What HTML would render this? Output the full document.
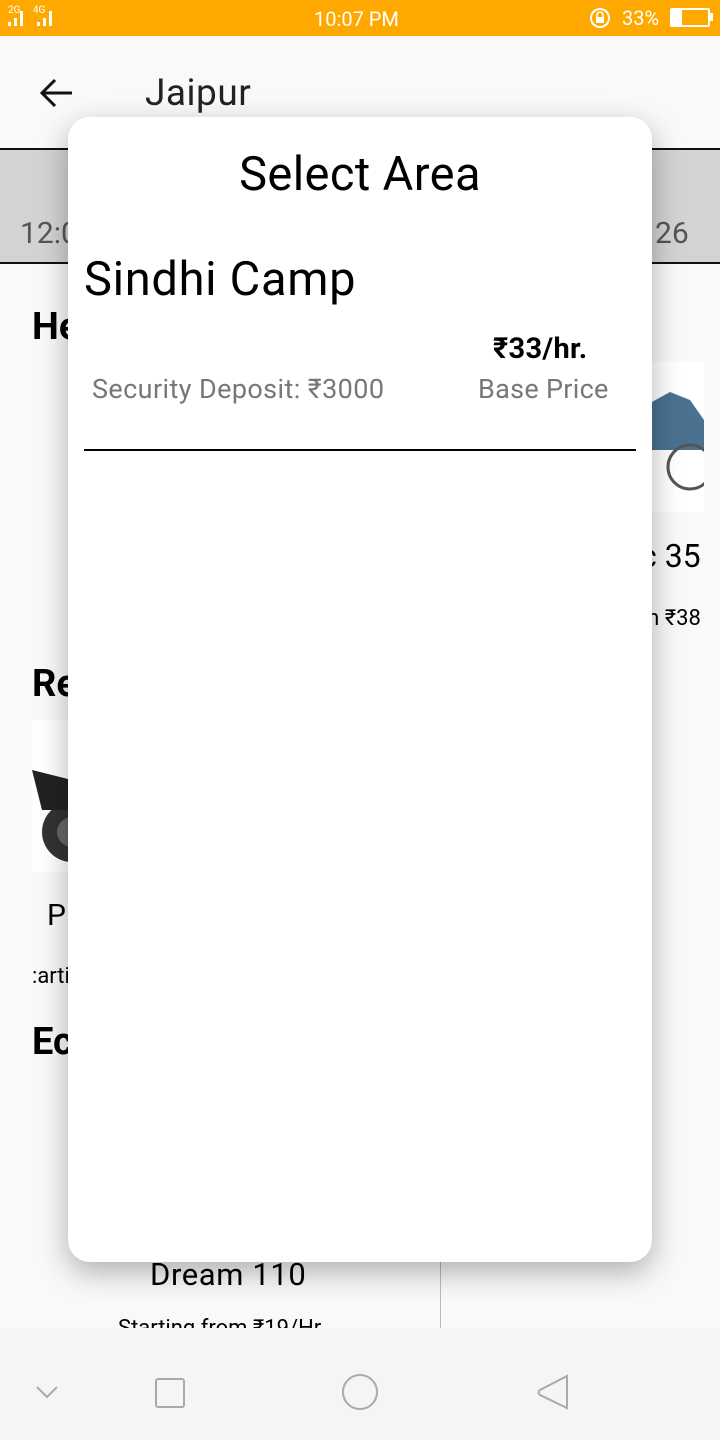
<!DOCTYPE html>
<html><head><meta charset="utf-8"><style>
*{margin:0;padding:0;box-sizing:border-box}
body{width:720px;height:1440px;overflow:hidden;background:#f9f9f9;font-family:"Roboto","Liberation Sans",sans-serif;position:relative}
.a{position:absolute;white-space:nowrap}
</style></head><body>
<div class="a" style="left:0;top:0;width:720px;height:36px;background:#ffa800"></div>
<div class="a" style="left:8px;top:6px;color:#fff;font-size:10px;line-height:10px">2G&nbsp;&nbsp;&nbsp;&nbsp;&nbsp;4G</div>
<svg class="a" style="left:8px;top:8px" width="50" height="20"><g fill="#fff"><rect x="0" y="14" width="3" height="4"/><rect x="6" y="10" width="3" height="8"/><rect x="12" y="3" width="3" height="15"/><rect x="29" y="14" width="3" height="4"/><rect x="35" y="10" width="3" height="8"/><rect x="41" y="3" width="3" height="15"/></g></svg>
<div class="a" style="left:314px;top:7px;color:#fff;font-size:20px">10:07 PM</div>
<svg class="a" style="left:589px;top:7px" width="24" height="24"><circle cx="11" cy="11" r="9" fill="none" stroke="#fff" stroke-width="2"/><rect x="7" y="10" width="8" height="6" fill="#fff"/><path d="M8 10V8a3 3 0 0 1 6 0v2" fill="none" stroke="#fff" stroke-width="1.6"/></svg>
<div class="a" style="left:622px;top:6px;color:#fff;font-size:20px">33%</div>
<div class="a" style="left:670px;top:8px;width:40px;height:19px;border:2px solid #fff;border-radius:2px"><div style="width:10px;height:100%;background:#fff"></div></div>
<div class="a" style="left:710px;top:13px;width:3px;height:8px;background:#fff"></div>
<svg class="a" style="left:38px;top:76px" width="36" height="34"><path d="M34 17H4M17 4L4 17l13 13" fill="none" stroke="#111" stroke-width="3"/></svg>
<div class="a" style="left:145px;top:72px;font-size:37px;letter-spacing:0.5px;color:#222">Jaipur</div>
<div class="a" style="left:0;top:148px;width:720px;height:116px;background:#d3d3d3;border-top:2px solid #111;border-bottom:2px solid #111"></div>
<div class="a" style="left:20px;top:216px;font-size:30px;color:#555">12:0</div>
<div class="a" style="left:655px;top:216px;font-size:30px;color:#555">26</div>
<div class="a" style="left:32px;top:305px;font-size:38px;font-weight:bold">He</div>
<div class="a" style="left:640px;top:362px;width:64px;height:150px;background:#fff"><svg width="64" height="150"><path d="M12 40l18 -10 20 8 14 20v30H12z" fill="#4a7290"/><circle cx="50" cy="105" r="22" fill="none" stroke="#555" stroke-width="3"/></svg></div>
<div class="a" style="left:640px;top:537px;font-size:32px">c 35</div>
<div class="a" style="left:640px;top:606px;font-size:22px">m ₹38</div>
<div class="a" style="left:32px;top:662px;font-size:38px;font-weight:bold">Re</div>
<div class="a" style="left:32px;top:720px;width:40px;height:152px;background:#fff"><svg width="40" height="152"><circle cx="40" cy="112" r="30" fill="#333"/><circle cx="40" cy="112" r="15" fill="#666"/><path d="M0 50l40 10v30H10z" fill="#222"/></svg></div>
<div class="a" style="left:47px;top:898px;font-size:30px">P</div>
<div class="a" style="left:32px;top:964px;font-size:22px">:arti</div>
<div class="a" style="left:32px;top:1020px;font-size:38px;font-weight:bold">Ec</div>
<div class="a" style="left:150px;top:1256px;font-size:31px;letter-spacing:0.6px">Dream 110</div>
<div class="a" style="left:118px;top:1316px;font-size:22px;height:12px;overflow:hidden">Starting from ₹19/Hr</div>
<div class="a" style="left:440px;top:1262px;width:1px;height:66px;background:#bbb"></div>
<div class="a" style="left:0;top:1328px;width:720px;height:112px;background:#f5f5f5"></div>
<svg class="a" style="left:0;top:1360px" width="720" height="64"><g fill="none" stroke="#aaa" stroke-width="2"><path d="M37 27l10 10 10-10"/><rect x="156" y="19" width="28" height="28" rx="2"/><circle cx="360" cy="32" r="17"/><path d="M567 16v32L540 35a3 3 0 0 1 0-5z"/></g></svg>
<div class="a" style="left:68px;top:117px;width:584px;height:1145px;background:#fff;border-radius:22px;box-shadow:0 10px 30px rgba(0,0,0,.3)"></div>
<div class="a" style="left:68px;top:147px;width:584px;text-align:center;font-size:47px;letter-spacing:0.4px;color:#000">Select Area</div>
<div class="a" style="left:84px;top:252px;font-size:47px;letter-spacing:0.7px;color:#000">Sindhi Camp</div>
<div class="a" style="left:493px;top:332px;font-size:29px;font-weight:bold;letter-spacing:0.3px">₹33/hr.</div>
<div class="a" style="left:92px;top:373px;font-size:27px;letter-spacing:0.4px;color:#777">Security Deposit: ₹3000</div>
<div class="a" style="left:478px;top:373px;font-size:27px;letter-spacing:0.3px;color:#777">Base Price</div>
<div class="a" style="left:84px;top:449px;width:552px;height:2px;background:#000"></div>
</body></html>
